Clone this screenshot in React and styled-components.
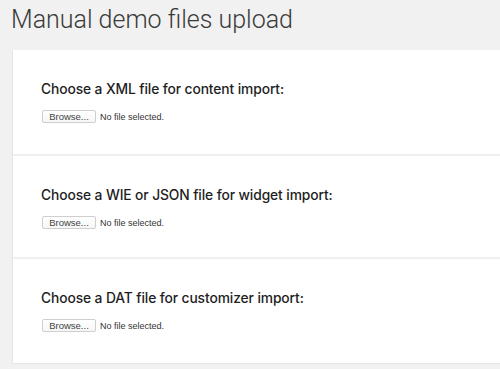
import styled, { createGlobalStyle } from "styled-components";

const GlobalStyle = createGlobalStyle`
  html, body {
    margin: 0;
    padding: 0;
    background: #f1f1f1;
    overflow: hidden;
  }
`;

const Page = styled.div`
  width: 500px;
  height: 369px;
  background: #f1f1f1;
  overflow: hidden;
  font-family: "Liberation Sans", Arial, sans-serif;
`;

const Title = styled.h1`
  margin: 0;
  padding: 5px 0 0 11px;
  height: 47px;
  box-sizing: border-box;
  font-family: Roboto, "Liberation Sans", sans-serif;
  font-weight: 300;
  font-size: 25px;
  line-height: 30px;
  color: #3a3a3a;
  white-space: nowrap;
`;

const Card = styled.div`
  margin: 3px 0 0 12px;
  padding-bottom: 3px;
  width: 520px;
  background: #fff;
  border-left: 1px solid #e6e6e6;
  box-shadow: 0 1px 1px rgba(0, 0, 0, 0.04);
`;

const Section = styled.div`
  height: ${(p) => (p.$first ? "104px" : "103px")};
  box-sizing: border-box;
  padding: 31px 0 0 28px;
  border-top: ${(p) => (p.$first ? "none" : "2px solid #f0f0f0")};
`;

const Heading = styled.h3`
  margin: 0 0 12px;
  font-family: Inter, "Liberation Sans", Arial, sans-serif;
  font-weight: 500;
  font-size: 13.8px;
  line-height: 17px;
  color: #1e1e1e;
  letter-spacing: -0.1px;
  white-space: nowrap;
`;

const FileRow = styled.div`
  display: flex;
  align-items: center;
  gap: 4px;
  padding-left: 1px;
`;

const BrowseButton = styled.button`
  width: 54px;
  height: 13px;
  padding: 0;
  border: 1px solid #cfcfcf;
  border-radius: 2px;
  background: linear-gradient(#fff, #f6f6f6);
  font-family: "Liberation Sans", Arial, sans-serif;
  font-size: 9.5px;
  line-height: 11px;
  color: #444;
`;

const FileName = styled.span`
  font-size: 9px;
  color: #333;
`;

const uploads = [
  "Choose a XML file for content import:",
  "Choose a WIE or JSON file for widget import:",
  "Choose a DAT file for customizer import:",
];

export default function App() {
  return (
    <Page>
      <GlobalStyle />
      <Title>Manual demo files upload</Title>
      <Card>
        {uploads.map((label, i) => (
          <Section key={label} $first={i === 0}>
            <Heading>{label}</Heading>
            <FileRow>
              <BrowseButton>Browse...</BrowseButton>
              <FileName>No file selected.</FileName>
            </FileRow>
          </Section>
        ))}
      </Card>
    </Page>
  );
}
